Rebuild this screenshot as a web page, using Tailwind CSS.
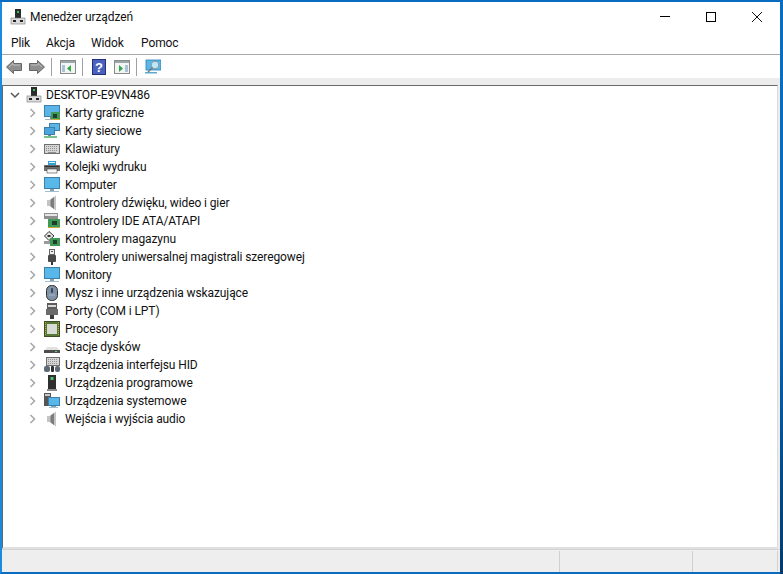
<!DOCTYPE html>
<html lang="pl">
  <head>
    <meta charset="UTF-8" />
    <title>Menedżer urządzeń</title>
    <script src="https://cdn.jsdelivr.net/npm/@tailwindcss/browser@4"></script>
  </head>
  <body class="bg-white overflow-hidden">
    <!-- Window frame: right edge darkens towards the bottom -->
    <div class="w-[783px] h-[574px] flex flex-col bg-linear-to-b from-[#0a6cc0] via-[#0a6cc0] to-[#053a6a] pt-[2px] pr-[3px]">
      <div class="flex-1 min-h-0 flex flex-col bg-white border-l-2 border-l-[#1a8ae0] border-b-2 border-b-[#0a6cc0] font-['Roboto',sans-serif] text-[12px] text-[#111] tracking-[-0.1px]">
        <!-- Title bar -->
        <div class="h-[31px] flex items-center shrink-0">
          <span class="ml-2 w-4 h-4 flex mt-[-1px]" data-icon="pc"></span>
          <span class="ml-1 mt-[-2px]">Menedżer urządzeń</span>
          <div class="ml-auto flex h-full">
            <div class="w-[46px] flex items-center justify-center"><div class="w-[10px] h-px bg-black mt-[-2px]"></div></div>
            <div class="w-[46px] flex items-center justify-center"><div class="w-[10px] h-[10px] border border-black mt-[-2px]"></div></div>
            <div class="w-[46px] flex items-center justify-center">
              <svg class="w-[10px] h-[10px] mt-[-2px]" viewBox="0 0 10 10"><path d="M0 0L10 10M10 0L0 10" stroke="#111" stroke-width="1" /></svg>
            </div>
          </div>
        </div>

        <!-- Menu -->
        <div class="h-[20px] pb-[1px] flex items-center shrink-0 border-b border-[#a8a8a8] box-content">
          <span class="ml-[9px] w-[35px]">Plik</span>
          <span class="w-[45px]">Akcja</span>
          <span class="w-[50px]">Widok</span>
          <span>Pomoc</span>
        </div>

        <!-- Toolbar -->
        <div class="h-[23px] flex items-center shrink-0">
          <span class="ml-1 w-4 h-4 flex" data-icon="back"></span>
          <span class="ml-[7px] w-4 h-4 flex" data-icon="forward"></span>
          <div class="ml-[6px] w-px h-[18px] bg-[#a0a0a0]"></div>
          <span class="ml-2 w-4 h-4 flex" data-icon="paneLeft"></span>
          <div class="ml-[6px] w-px h-[18px] bg-[#a0a0a0]"></div>
          <span class="ml-[9px] w-[14px] h-4 flex" data-icon="help"></span>
          <span class="ml-2 w-4 h-4 flex" data-icon="paneRight"></span>
          <div class="ml-[6px] w-px h-[18px] bg-[#a0a0a0]"></div>
          <span class="ml-2 w-4 h-4 flex" data-icon="scan"></span>
        </div>

        <!-- Tree -->
        <div class="flex-1 flex flex-col bg-[#ececec] pt-[7px] min-h-0">
          <div id="tree" class="flex-1 bg-white border-t border-t-[#696969] border-l border-l-[#696969] border-r border-r-[#dcdcdc] border-b-2 border-b-[#e0e0e0] mr-[2px]"></div>
        </div>

        <!-- Status bar -->
        <div class="h-[23px] shrink-0 flex bg-[#eeeeee] border-t border-[#d4d4d4] pt-[1px]">
          <div class="w-[558px] border-r border-[#d0d0d0]"></div>
          <div class="w-[133px] border-r border-[#d0d0d0]"></div>
          <div class="w-[85px] border-r border-[#d0d0d0] mb-[1px]"></div>
        </div>
      </div>
    </div>

    <script>
      const icons = {
        pc: `<rect x="5" y="0" width="6" height="9" fill="#2b2b2b"/><rect x="7" y="2" width="2" height="2" fill="#35c05a"/><rect x="1" y="9" width="14" height="6" fill="#dcdcdc" stroke="#777" stroke-width=".6"/><rect x="3" y="11" width="3" height="2" fill="#222"/><rect x="10" y="11" width="3" height="2" fill="#222"/>`,
        back: `<path d="M.5 8L7.500 1.500V4.500H15.500V11.500H7.500V14.500Z" fill="#8f8f8f" stroke="#666"/><path d="M3 8L7 4.500V6H14" fill="none" stroke="#bdbdbd"/>`,
        forward: `<path d="M15.500 8L8.500 1.500V4.500H.5V11.500H8.500V14.500Z" fill="#8f8f8f" stroke="#666"/><path d="M2 6H9V4.500L13 8" fill="none" stroke="#bdbdbd"/>`,
        paneLeft: `<rect x=".5" y="1.5" width="15" height="13" fill="#f4f4f4" stroke="#8a8a8a"/><rect x="1" y="2" width="14" height="2" fill="#9aa7ad"/><rect x="2" y="6" width="3" height="7" fill="#a9c3d6"/><path d="M11 6V13L7 9.5Z" fill="#2fa84a"/>`,
        paneRight: `<rect x=".5" y="1.5" width="15" height="13" fill="#f4f4f4" stroke="#8a8a8a"/><rect x="1" y="2" width="14" height="2" fill="#9aa7ad"/><rect x="11" y="6" width="3" height="7" fill="#a9c3d6"/><path d="M5 6V13L9 9.5Z" fill="#2fa84a"/>`,
        help: `<rect x=".5" y=".5" width="13" height="15" fill="#4a62bd" stroke="#22307c"/><text x="7" y="13" font-size="13" font-weight="700" font-family="Liberation Sans" text-anchor="middle" fill="#fff">?</text>`,
        scan: `<rect x="1" y="1" width="15" height="10" fill="#58b8e8" stroke="#2b82b8" stroke-width=".8"/><rect x="0" y="13" width="12" height="1.500" fill="#5fa8d0"/><circle cx="10" cy="6" r="3.800" fill="#bfe6f7" stroke="#8a9aa3"/><path d="M7.500 8.500L3 13" stroke="#777" stroke-width="1.400"/>`,
        gpu: `<rect x=".5" y=".5" width="15" height="11" fill="#5ab4e6" stroke="#3d7fa8"/><rect x="6" y="12" width="4" height="2" fill="#7a8b96"/><rect x="1" y="14" width="10" height="1" fill="#9bb6c6"/><rect x="7" y="7" width="9" height="8" fill="#3f9a5a"/><rect x="9" y="9" width="4" height="4" fill="#1f3f2c"/><rect x="7" y="14" width="9" height="1" fill="#c9a93c"/>`,
        net: `<rect x="5.500" y=".5" width="10" height="7" fill="#5ab4e6" stroke="#3d7fa8"/><rect x=".5" y="4.500" width="10" height="7" fill="#4aa6dc" stroke="#3d7fa8"/><rect x="4" y="12" width="3" height="1" fill="#6c8a9c"/><path d="M0 14H13" stroke="#3fa85a" stroke-width="1.400"/>`,
        keyboard: `<rect x=".5" y="3.500" width="15" height="9" fill="#d6d6d6" stroke="#6f6f6f"/><path d="M2 5.500H14M2 7.500H14M2 9.500H14" stroke="#8f8f8f" stroke-dasharray="1 1"/><rect x="4" y="11" width="8" height="1" fill="#8f8f8f"/>`,
        printer: `<rect x="4" y="2" width="8" height="4" fill="#35a0d8"/><rect x="5" y="3" width="6" height="1" fill="#e8f4fb"/><rect x="0" y="6" width="16" height="6" fill="#6f6f6f"/><rect x="1" y="7" width="14" height="1" fill="#2f2f2f"/><rect x="3" y="10" width="10" height="4" fill="#f6f6f6" stroke="#444" stroke-width=".6"/>`,
        monitor: `<rect x=".5" y=".5" width="15" height="11" fill="#58b8ea" stroke="#3d7fa8"/><rect x="6" y="12" width="4" height="2" fill="#8aa0ad"/><rect x="1" y="14" width="14" height="1" fill="#9fc0d2"/>`,
        speaker: `<path d="M3 5H6L12 .5V15.500L6 11H3Z" fill="#c4c4c4"/><path d="M6.500 4.500L10 2V14L6.500 11.500Z" fill="#7c7c7c"/>`,
        ide: `<rect x="0" y="0" width="14" height="6" fill="#8f8f8f"/><rect x="1" y="1" width="12" height="2" fill="#e6e6e6"/><rect x="4" y="6" width="12" height="9" fill="#3f9a5a"/><rect x="8" y="8" width="5" height="4" fill="#1f3f2c"/><rect x="4" y="14" width="12" height="1" fill="#c9a93c"/>`,
        storage: `<path d="M5 .5L10 5L5 9.500L.5 5Z" fill="#e6e6e6" stroke="#333"/><rect x="3.500" y="4" width="3" height="2" fill="#333"/><rect x="0" y="10" width="9" height="3" fill="#9a9a9a"/><rect x="6" y="7" width="10" height="8" fill="#3f9a5a"/><rect x="9" y="9" width="4" height="4" fill="#1f3f2c"/>`,
        usb: `<rect x="5.500" y=".5" width="5" height="5" fill="#eee" stroke="#666"/><rect x="7" y="2" width="2" height="1" fill="#555"/><rect x="4" y="6" width="8" height="7" rx="1" fill="#4a4a4a"/><rect x="7" y="13" width="2" height="3" fill="#333"/>`,
        mouse: `<rect x="2.500" y=".5" width="11" height="15" rx="5" fill="#7f93a8" stroke="#2f2f2f"/><rect x="7" y="3" width="2" height="5" rx="1" fill="#3a4552"/><path d="M5 10H11" stroke="#a9b8c6"/>`,
        port: `<rect x="3" y="0" width="10" height="6" fill="#5c5c5c"/><rect x="4" y="2" width="8" height="2" fill="#d8d8d8"/><rect x="2" y="6" width="12" height="6" fill="#6b6b6b"/><rect x="6" y="12" width="4" height="4" fill="#3c3c3c"/>`,
        cpu: `<rect x=".5" y=".5" width="15" height="15" fill="#587a38" stroke="#3a4f24"/><rect x="3" y="3" width="10" height="10" fill="#d8dcd4"/><path d="M1.500 1V15M14.500 1V15" stroke="#c9a93c" stroke-dasharray="1 1"/>`,
        disk: `<path d="M3 8H13L15 11H1Z" fill="#e2e2e2"/><rect x="0" y="11" width="16" height="3" fill="#4d4d4d"/><rect x="11" y="12" width="2" height="1" fill="#66d17c"/>`,
        hid: `<rect x="2.500" y=".5" width="13" height="8" fill="#d6d6d6" stroke="#6f6f6f"/><path d="M4 2.500H14M4 4.500H14M4 6.500H14" stroke="#8f8f8f" stroke-dasharray="1 1"/><rect x="0" y="9" width="6" height="6" rx="2" fill="#5d6a78"/><rect x="7" y="9" width="3" height="6" rx="1" fill="#2e2e2e"/><rect x="11" y="9" width="5" height="6" rx="2" fill="#5d6a78"/>`,
        firmware: `<rect x="4" y="0" width="8" height="14" fill="#2f2f2f"/><rect x="6.500" y="2" width="3" height="3" fill="#4fc06a"/><rect x="3" y="14" width="10" height="2" fill="#8a8a8a"/>`,
        system: `<rect x="0" y="0" width="7" height="13" fill="#565656"/><rect x="1" y="1" width="5" height="2" fill="#c8c8c8"/><rect x="4.500" y="4.500" width="11" height="8" fill="#58b8ea" stroke="#3d7fa8"/><rect x="7" y="13" width="5" height="1" fill="#8aa0ad"/><rect x="5" y="14" width="9" height="1" fill="#9fc0d2"/>`,
      };

      const categories = [
        ["gpu", "Karty graficzne"],
        ["net", "Karty sieciowe"],
        ["keyboard", "Klawiatury"],
        ["printer", "Kolejki wydruku"],
        ["monitor", "Komputer"],
        ["speaker", "Kontrolery dźwięku, wideo i gier"],
        ["ide", "Kontrolery IDE ATA/ATAPI"],
        ["storage", "Kontrolery magazynu"],
        ["usb", "Kontrolery uniwersalnej magistrali szeregowej"],
        ["monitor", "Monitory"],
        ["mouse", "Mysz i inne urządzenia wskazujące"],
        ["port", "Porty (COM i LPT)"],
        ["cpu", "Procesory"],
        ["disk", "Stacje dysków"],
        ["hid", "Urządzenia interfejsu HID"],
        ["firmware", "Urządzenia programowe"],
        ["system", "Urządzenia systemowe"],
        ["speaker", "Wejścia i wyjścia audio"],
      ];

      const svg = (name, cls) =>
        `<svg class="${cls}" viewBox="0 0 ${name === "help" ? 14 : 16} 16">${icons[name]}</svg>`;

      document.querySelectorAll("[data-icon]").forEach((el) => {
        el.innerHTML = svg(el.dataset.icon, "w-full h-full");
      });

      // Root row + one row per device category
      document.getElementById("tree").innerHTML =
        `<div class="h-[18px] flex items-center">
          <svg class="ml-[7px] w-[10px] h-[10px]" viewBox="0 0 10 10"><path d="M1 3L5 7L9 3" fill="none" stroke="#555" stroke-width="1.500"/></svg>
          <span class="ml-[6px] w-4 h-4 flex">${svg("pc", "w-full h-full")}</span>
          <span class="ml-1">DESKTOP-E9VN486</span>
        </div>` +
        categories
          .map(
            ([icon, label]) => `
        <div class="h-[18px] flex items-center">
          <svg class="ml-[26px] w-[7px] h-[10px]" viewBox="0 0 7 10"><path d="M1.500 1L5.500 5L1.500 9" fill="none" stroke="#a6a6a6" stroke-width="1.500"/></svg>
          <span class="ml-[8px] w-4 h-4 flex">${svg(icon, "w-full h-full")}</span>
          <span class="ml-[5px]">${label}</span>
        </div>`
          )
          .join("");
    </script>
  </body>
</html>
